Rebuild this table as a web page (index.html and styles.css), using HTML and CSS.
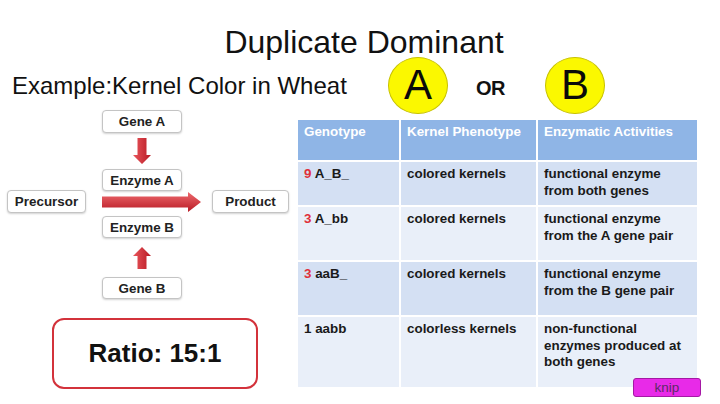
FILE: index.html
```html
<!DOCTYPE html>
<html>
<head>
<meta charset="utf-8">
<link rel="stylesheet" href="styles.css">
</head>
<body>
<div class="slide">
  <h1 class="title">Duplicate Dominant</h1>
  <div class="subrow">
    <div class="subtitle">Example:Kernel Color in Wheat</div>
    <div class="circle">A</div>
    <div class="or">OR</div>
    <div class="circle circle-b">B</div>
  </div>
  <div class="main">
    <div class="left">
      <div class="diagram">
        <div class="node gene-a">Gene A</div>
        <svg class="arrow-down" width="18" height="26" viewBox="0 0 18 26">
          <defs>
            <linearGradient id="gv" x1="0" y1="0" x2="1" y2="0">
              <stop offset="0" stop-color="#e9565c"/>
              <stop offset="1" stop-color="#b81a24"/>
            </linearGradient>
          </defs>
          <path d="M4.5 0 H13.5 V17 H18 L9 26 L0 17 H4.5 Z" fill="url(#gv)"/>
        </svg>
        <div class="node enzyme-a">Enzyme A</div>
        <div class="node precursor">Precursor</div>
        <svg class="arrow-right" width="99" height="20" viewBox="0 0 99 20">
          <defs>
            <linearGradient id="gh" x1="0" y1="0" x2="0" y2="1">
              <stop offset="0" stop-color="#ee6a6e"/>
              <stop offset="1" stop-color="#b81a24"/>
            </linearGradient>
          </defs>
          <path d="M0 4.5 H86 V0 L99 10 L86 20 V15.5 H0 Z" fill="url(#gh)"/>
        </svg>
        <div class="node product">Product</div>
        <div class="node enzyme-b">Enzyme B</div>
        <svg class="arrow-up" width="18" height="22" viewBox="0 0 18 22">
          <path d="M4.5 22 H13.5 V9 H18 L9 0 L0 9 H4.5 Z" fill="url(#gv)"/>
        </svg>
        <div class="node gene-b">Gene B</div>
      </div>
      <div class="ratio">Ratio: 15:1</div>
    </div>
    <div class="table">
      <div class="cell head">Genotype</div>
      <div class="cell head">Kernel Phenotype</div>
      <div class="cell head">Enzymatic Activities</div>

      <div class="cell dark"><span class="num">9</span> A_B_</div>
      <div class="cell dark">colored kernels</div>
      <div class="cell dark">functional enzyme<br>from both genes</div>

      <div class="cell light"><span class="num">3</span> A_bb</div>
      <div class="cell light">colored kernels</div>
      <div class="cell light">functional enzyme<br>from the A gene pair</div>

      <div class="cell dark"><span class="num">3</span> aaB_</div>
      <div class="cell dark">colored kernels</div>
      <div class="cell dark">functional enzyme<br>from the B gene pair</div>

      <div class="cell light">1 aabb</div>
      <div class="cell light">colorless kernels</div>
      <div class="cell light">non-functional<br>enzymes produced at<br>both genes</div>
    </div>
  </div>
  <button class="knip">knip</button>
</div>
</body>
</html>
```
FILE: styles.css
```css
html, body {
  margin: 0;
  padding: 0;
  background: #ffffff;
}
body {
  width: 720px;
  height: 404px;
  overflow: hidden;
  font-family: "Liberation Sans", Arial, sans-serif;
  color: #111;
}
.slide {
  position: relative;
  width: 720px;
  height: 404px;
}
.title {
  margin: 0;
  padding-top: 26px;
  font-size: 32px;
  font-weight: normal;
  line-height: 32px;
  text-align: center;
  padding-left: 8px;
  color: #111;
}
.subrow {
  display: flex;
  align-items: center;
  height: 56px;
  margin-top: -1px;
}
.subtitle {
  flex: 0 0 388px;
  box-sizing: border-box;
  padding-left: 12px;
  font-size: 24px;
  line-height: 28px;
  margin-top: 2px;
}
.circle {
  flex: 0 0 auto;
  width: 58px;
  height: 55px;
  border-radius: 50%;
  background: #fbf800;
  border: 1px solid #c8c200;
  display: flex;
  align-items: center;
  justify-content: center;
  font-size: 42px;
  line-height: 42px;
  color: #0a0a0a;
}
.circle-b {
  margin-left: 40px;
}
.or {
  flex: 0 0 auto;
  margin-left: 28px;
  margin-top: 6px;
  font-size: 20px;
  font-weight: bold;
  line-height: 24px;
  letter-spacing: -0.5px;
  color: #111;
}
.main {
  display: flex;
  align-items: flex-start;
  margin-top: -4px;
}
.left {
  flex: 0 0 298px;
}
.diagram {
  position: relative;
  height: 196px;
}
.node {
  position: absolute;
  box-sizing: border-box;
  width: 80px;
  height: 23px;
  background: #fff;
  border: 1px solid #c4c4c4;
  border-radius: 4px;
  box-shadow: 0 1px 2px rgba(0,0,0,0.18);
  font-size: 13.4px;
  font-weight: bold;
  color: #222;
  display: flex;
  align-items: center;
  justify-content: center;
}
.gene-a { left: 102px; top: 1px; }
.enzyme-a { left: 102px; top: 60px; height: 22px; }
.precursor { left: 7px; top: 81px; width: 79px; }
.product { left: 212px; top: 81px; width: 77px; }
.enzyme-b { left: 102px; top: 107px; height: 22px; }
.gene-b { left: 102px; top: 168px; height: 22px; }
.arrow-down { position: absolute; left: 133px; top: 29px; }
.arrow-right { position: absolute; left: 102px; top: 83px; }
.arrow-up { position: absolute; left: 133px; top: 138px; }
.ratio {
  margin-top: 13px;
  margin-left: 52px;
  width: 206px;
  height: 71px;
  box-sizing: border-box;
  border: 2px solid #d3323b;
  border-radius: 12px;
  display: flex;
  align-items: center;
  justify-content: center;
  font-size: 26px;
  font-weight: bold;
  color: #111;
}
.table {
  margin-top: 11px;
  display: grid;
  grid-template-columns: 101px 135px 159px;
  grid-template-rows: 40px 43px 53px 53px 70px;
  gap: 2px;
  font-size: 13.4px;
  font-weight: bold;
  line-height: 16.5px;
}
.cell {
  box-sizing: border-box;
  padding: 4px 5px 0 6px;
  color: #1a1a1a;
}
.head {
  background: #8fb5e6;
  color: #ffffff;
}
.dark { background: #d4e0f3; }
.light { background: #e9eff9; }
.num { color: #e0313a; }
.knip {
  position: absolute;
  left: 633px;
  top: 378px;
  width: 68px;
  height: 19px;
  box-sizing: border-box;
  padding: 0;
  margin: 0;
  background: #e82ae8;
  border: 1px solid #a418a4;
  border-radius: 3px;
  font-family: "Liberation Sans", Arial, sans-serif;
  font-size: 13.5px;
  line-height: 17px;
  color: #5c2a66;
}
```
